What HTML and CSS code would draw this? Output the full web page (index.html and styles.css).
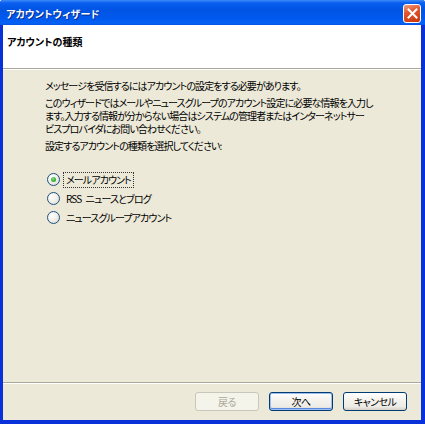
FILE: index.html
```html
<!DOCTYPE html>
<html lang="ja">
  <head>
    <meta charset="UTF-8" />
    <title>アカウントウィザード</title>
    <link rel="stylesheet" href="styles.css">
  </head>
  <body>
    <div class="window">
      <div class="titlebar">
        <span class="title">アカウントウィザード</span>
        <span class="close">
          <svg width="11" height="11" viewBox="0 0 11 11">
            <path d="M1.5 1.5 L9.5 9.5 M9.5 1.5 L1.5 9.5" stroke="#fff" stroke-width="2" stroke-linecap="square" />
          </svg>
        </span>
      </div>
      <div class="client">
        <div class="header">
          <h1>アカウントの種類</h1>
        </div>

        <div class="content">
          <p>メッセージを受信するにはアカウントの設定をする必要があります。</p>
          <p>このウィザードではメールやニュースグループのアカウント設定に必要な情報を入力し<br>ます。入力する情報が分からない場合はシステムの管理者またはインターネットサー<br>ビスプロバイダにお問い合わせください。</p>
          <p>設定するアカウントの種類を選択してください:</p>

          <ul class="options">
            <li><span class="radio checked"></span><span class="label focused">メールアカウント</span></li>
            <li><span class="radio"></span><span class="label">RSS ニュースとブログ</span></li>
            <li><span class="radio"></span><span class="label">ニュースグループアカウント</span></li>
          </ul>
        </div>

        <div class="footer">
          <button class="btn" disabled>戻る</button>
          <button class="btn default">次へ</button>
          <button class="btn">キャンセル</button>
        </div>
      </div>
    </div>
  </body>
</html>
```

FILE: styles.css
```css
body {
  margin: 0;
  padding: 0;
  background: #fff;
  font-family: "Noto Sans CJK JP", "Noto Sans", sans-serif;
  font-size: 10px;
  letter-spacing: -0.9px;
  word-spacing: 3px;
  font-feature-settings: "palt";
  color: #000;
}
.window {
  width: 425px;
  height: 424px;
  display: flex;
  flex-direction: column;
  background: #0831d9;
  box-sizing: border-box;
  border-radius: 3px 3px 0 0;
  overflow: hidden;
}
.titlebar {
  height: 25px;
  display: flex;
  align-items: center;
  justify-content: space-between;
  padding: 0 4px 0 6px;
  background: linear-gradient(180deg, #3c8cf8 0, #0a5ef0 3px, #0054e3 10px, #0058ee 18px, #0462f4 23px, #0553e0 25px);
}
.title {
  color: #fff;
  font-weight: bold;
  letter-spacing: 0.2px;
  text-shadow: 1px 1px 0 #0a2a8a;
  margin-top: 1px;
}
.close {
  width: 18px;
  height: 19px;
  box-sizing: border-box;
  border: 1px solid #fff;
  border-radius: 3px;
  background: linear-gradient(160deg, #f0a080 0, #e2542c 40%, #c8380e 100%);
  display: flex;
  align-items: center;
  justify-content: center;
  margin-top: 2px;
}
.client {
  flex: 1;
  display: flex;
  flex-direction: column;
  margin: 0 4px 4px 3px;
  background: #ece9d8;
}
.header {
  height: 44px;
  box-sizing: border-box;
  background: #fff;
  border-bottom: 1px solid #aca899;
  box-shadow: 0 1px 0 #fff;
  padding: 10px 4px 0 4px;
}
.header h1 {
  margin: 0;
  font-size: 10px;
  line-height: 13px;
  letter-spacing: 0;
  font-weight: bold;
}
.content {
  flex: 1;
  padding: 10px 0 0 42px;
}
.content p {
  margin: 0 0 4px 0;
  line-height: 13px;
  white-space: nowrap;
}
.options {
  list-style: none;
  margin: 18px 0 0 0;
  padding: 0;
}
.options li {
  height: 19px;
  display: flex;
  align-items: center;
}
.radio {
  width: 13px;
  height: 13px;
  box-sizing: border-box;
  margin-left: 2px;
  border: 1px solid #1c5180;
  border-radius: 50%;
  background: radial-gradient(circle at 35% 35%, #fff 0, #f2f1ec 45%, #d8d6cc 100%);
  display: flex;
  align-items: center;
  justify-content: center;
}
.radio.checked::after {
  content: "";
  width: 5px;
  height: 5px;
  border-radius: 50%;
  background: radial-gradient(circle at 40% 35%, #7ee07a 0, #21a121 80%);
}
.label {
  margin-left: 3px;
  padding: 1px 2px;
  line-height: 12px;
  border: 1px dotted transparent;
}
.label.focused {
  border-color: #333;
}
.footer {
  height: 38px;
  box-sizing: border-box;
  border-top: 1px solid #aca899;
  box-shadow: inset 0 1px 0 #fff;
  display: flex;
  justify-content: flex-end;
  align-items: flex-start;
  gap: 10px;
  padding: 9px 14px 0 0;
}
.btn {
  width: 64px;
  height: 19px;
  padding: 0;
  font-family: inherit;
  font-size: 10px;
  letter-spacing: -0.6px;
  font-feature-settings: "palt";
  color: #000;
  border: 1px solid #003c74;
  border-radius: 3px;
  background: linear-gradient(180deg, #fff 0, #f4f3ee 40%, #ecebe6 80%, #d6d0c5 100%);
  cursor: pointer;
}
.btn.default {
  box-shadow: inset 0 0 0 1px #9dbdf0, inset 0 -1px 0 1px #5a8ae0;
}
.btn:disabled {
  color: #aca899;
  border-color: #c9c7ba;
  background: #f5f4ea;
  cursor: default;
}
```
